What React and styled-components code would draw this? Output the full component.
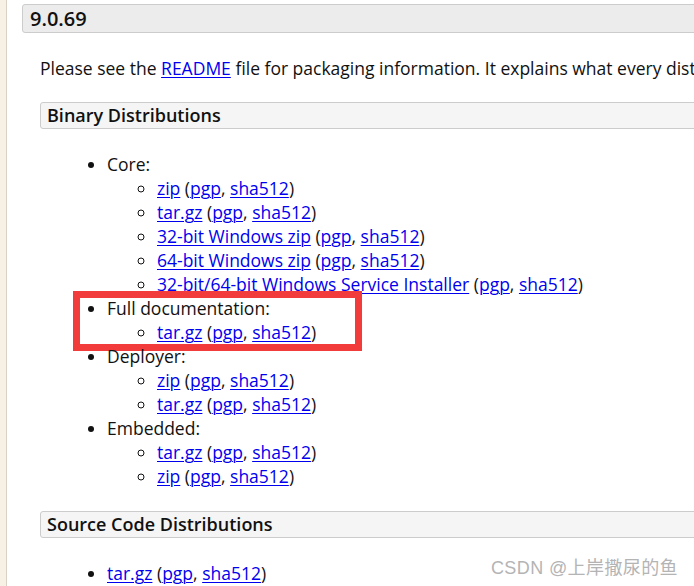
import React from 'react';
import styled, { createGlobalStyle } from 'styled-components';

const Global = createGlobalStyle`
  html, body { margin: 0; padding: 0; background: #fff; }
  body {
    font-family: "Open Sans", "Noto Sans", sans-serif;
    color: #111;
    overflow: hidden;
  }
`;

const Page = styled.div`
  position: relative;
  display: flex;
  width: 694px;
  height: 586px;
  overflow: hidden;
  background: #fff;
`;

const Strip = styled.div`
  flex: 0 0 6px;
  background: #f7f0e5;
  border-right: 1px solid #d9d1c6;
`;

const Main = styled.main`
  flex: 0 0 900px;
  padding: 4px 0 0 15px;
  font-size: 17.5px;
  line-height: 24px;
`;

const VersionHeader = styled.h3`
  margin: 0;
  height: 27px;
  line-height: 27px;
  padding: 0 7px;
  font-size: 20px;
  font-weight: 600;
  background: #ececec;
  border: 1px solid #cccccc;
  border-radius: 3px;
`;

const Section = styled.div`
  margin-left: 18px;
`;

const Para = styled.p`
  margin: 23px 0 0 0;
`;

const SectionHeader = styled.h4`
  margin: ${p => p.$top}px 0 0 0;
  height: 25px;
  line-height: 25px;
  padding: 0 6px;
  font-size: 18px;
  font-weight: 600;
  background: #f5f5f5;
  border: 1px solid #cccccc;
  border-radius: 3px;
`;

const List = styled.ul`
  margin: 23px 0 0 0;
  padding-left: 67px;
  list-style: disc;
`;

const SubList = styled.ul`
  margin: 0;
  padding-left: 50px;
  list-style: circle;
`;

const Item = styled.li`
  position: relative;
  ${p => p.$highlight && `
    &::after {
      content: "";
      position: absolute;
      left: -34px;
      top: -5px;
      width: 275px;
      bottom: -7px;
      border: 7px solid #f23b3b;
      pointer-events: none;
    }
  `}
`;

const Link = styled.a`
  color: #0000ee;
  text-decoration: underline;
  text-underline-offset: 2px;
  text-decoration-thickness: 1px;
`;

const Watermark = styled.div`
  position: absolute;
  right: 16px;
  bottom: 7px;
  font-family: "Liberation Sans", "Noto Sans CJK SC", sans-serif;
  font-size: 18px;
  color: #b4b4b4;
  text-shadow: 0 0 2px #fff;
  letter-spacing: 0.4px;
`;

const Dl = ({ name }) => (
  <>
    <Link href="#">{name}</Link> (<Link href="#">pgp</Link>, <Link href="#">sha512</Link>)
  </>
);

const groups = [
  { title: 'Core:', files: ['zip', 'tar.gz', '32-bit Windows zip', '64-bit Windows zip', '32-bit/64-bit Windows Service Installer'] },
  { title: 'Full documentation:', files: ['tar.gz'], highlight: true },
  { title: 'Deployer:', files: ['zip', 'tar.gz'] },
  { title: 'Embedded:', files: ['tar.gz', 'zip'] },
];

export default function App() {
  return (
    <>
      <Global />
      <Page>
        <Strip />
        <Main>
          <VersionHeader>9.0.69</VersionHeader>
          <Section>
            <Para>
              Please see the <Link href="#">README</Link> file for packaging information. It explains what every distribution contains.
            </Para>
            <SectionHeader $top={22}>Binary Distributions</SectionHeader>
            <List>
              {groups.map(g => (
                <Item key={g.title} $highlight={g.highlight}>
                  {g.title}
                  <SubList>
                    {g.files.map(f => (
                      <Item key={f}><Dl name={f} /></Item>
                    ))}
                  </SubList>
                </Item>
              ))}
            </List>
            <SectionHeader $top={23}>Source Code Distributions</SectionHeader>
            <List>
              <Item><Dl name="tar.gz" /></Item>
            </List>
          </Section>
        </Main>
        <Watermark>CSDN @上岸撒尿的鱼</Watermark>
      </Page>
    </>
  );
}
